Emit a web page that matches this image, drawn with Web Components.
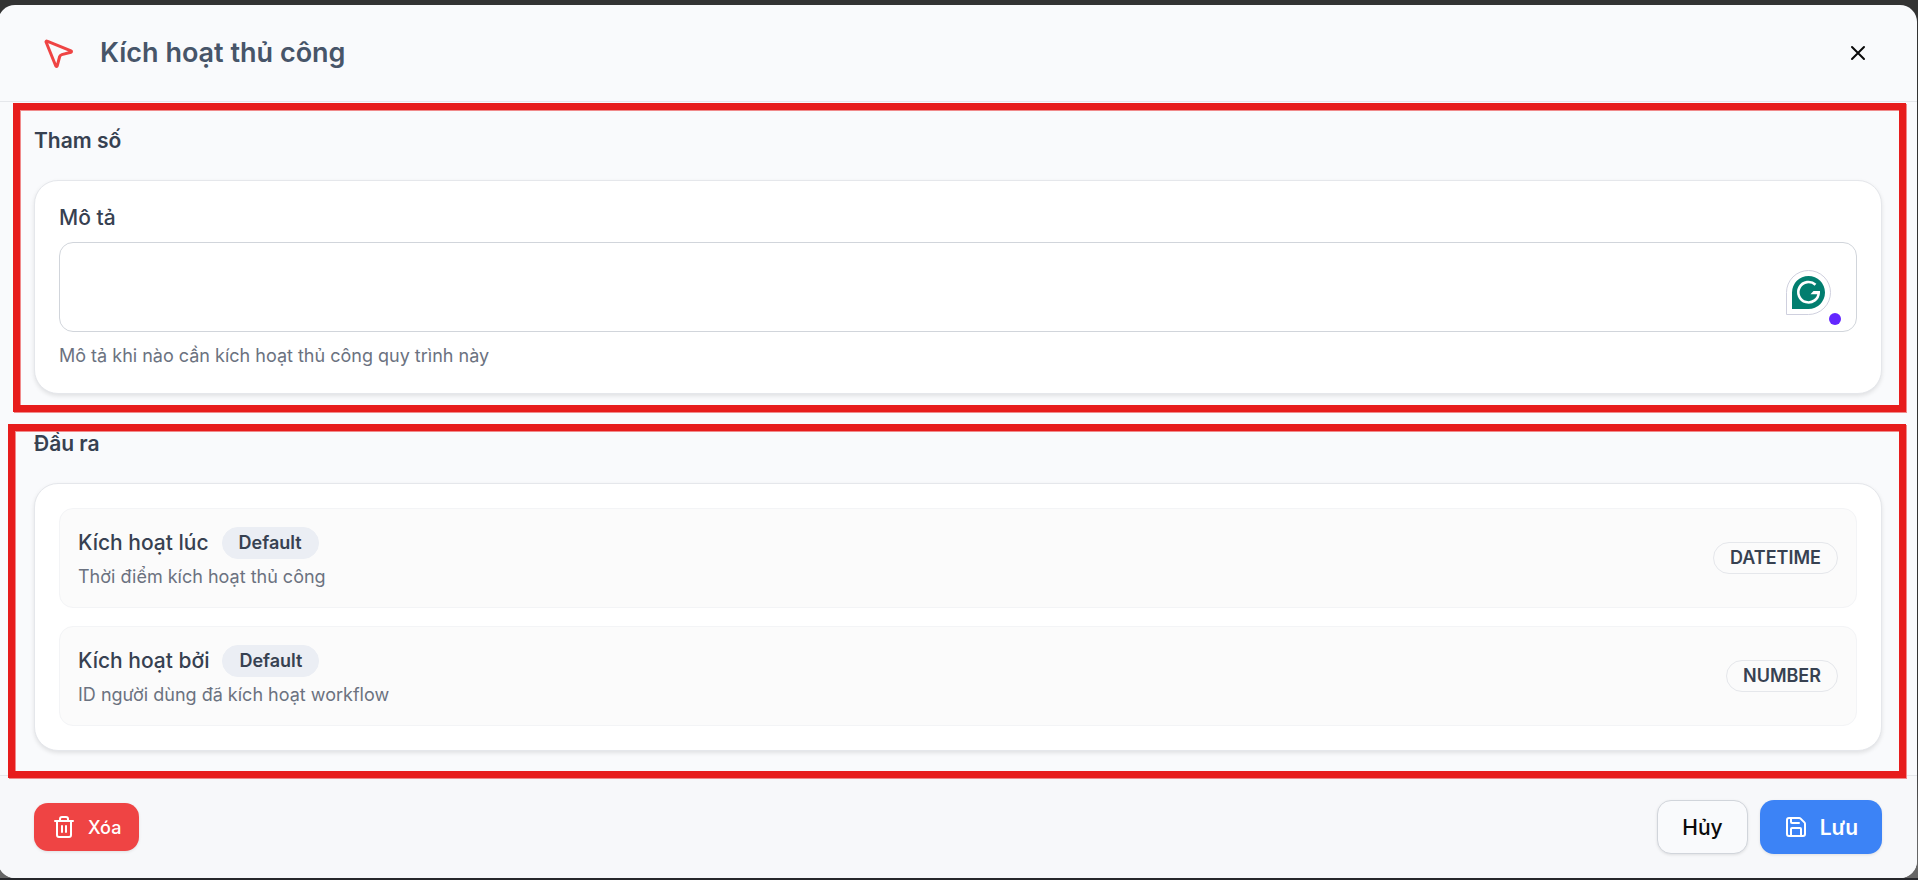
<!DOCTYPE html>
<html lang="vi">
<head>
<meta charset="utf-8">
<meta name="viewport" content="width=device-width, initial-scale=1">
<title>Kích hoạt thủ công</title>
<style>
  body {
    margin: 0;
    min-height: 100vh;
    display: flex;
    box-sizing: border-box;
    padding: 5px 1px 2px 0;
    overflow: hidden;
    background: linear-gradient(#333 0 85%, #666 95% calc(100% - 2px), #26272b calc(100% - 2px));
    font-family: Inter, "Noto Sans", sans-serif;
    color: #374151;
  }
</style>
</head>
<body>

<node-dialog heading="Kích hoạt thủ công">
  <panel-section class="params" heading="Tham số">
    <text-field label="Mô tả" hint="Mô tả khi nào cần kích hoạt thủ công quy trình này"></text-field>
  </panel-section>
  <panel-section class="outputs" heading="Đầu ra">
    <output-item name="Kích hoạt lúc" type="DATETIME">Thời điểm kích hoạt thủ công</output-item>
    <output-item name="Kích hoạt bởi" type="NUMBER">ID người dùng đã kích hoạt workflow</output-item>
  </panel-section>
  <action-button slot="left" variant="danger" icon="trash">Xóa</action-button>
  <action-button slot="right" variant="outline">Hủy</action-button>
  <action-button slot="right" variant="primary" icon="save">Lưu</action-button>
</node-dialog>

<script>
const icons = {
    trash: '<path d="M3 6h18M19 6v14a2 2 0 0 1-2 2H7a2 2 0 0 1-2-2V6M8 6V4a2 2 0 0 1 2-2h4a2 2 0 0 1 2 2v2M10 11v6M14 11v6"/>',
    save: '<path d="M15.2 3a2 2 0 0 1 1.4.6l3.8 3.8a2 2 0 0 1 .6 1.4V19a2 2 0 0 1-2 2H5a2 2 0 0 1-2-2V5a2 2 0 0 1 2-2z"/><path d="M17 21v-7a1 1 0 0 0-1-1H8a1 1 0 0 0-1 1v7M7 3v4a1 1 0 0 0 1 1h7"/>',
    close: '<path d="M18 6 6 18M6 6l12 12"/>',
    pointer: '<path d="M4.037 4.688a.495.495 0 0 1 .651-.651l16 6.5a.5.5 0 0 1-.063.947l-6.124 1.58a2 2 0 0 0-1.438 1.435l-1.579 6.126a.5.5 0 0 1-.947.063z"/>'
};

function icon(name, size) {
    return `<svg width="${size}" height="${size}" viewBox="0 0 24 24" fill="none" stroke="currentColor" stroke-width="2" stroke-linecap="round" stroke-linejoin="round" aria-hidden="true">${icons[name]}</svg>`;
}

class NodeDialog extends HTMLElement {
    constructor() {
        super();
        this.shadowDOM = this.attachShadow({mode: 'open'});
    }

    connectedCallback() {
        this.shadowDOM.innerHTML = `
        <style>
          :host {
            flex: 1;
            display: flex;
            flex-direction: column;
            margin-left: -2px;
            border-radius: 17px;
            background: #f9fafc;
          }

          header {
            display: flex;
            align-items: center;
            gap: 24px;
            height: 96px;
            padding: 0 47px 0 42px;
            border-bottom: 1px solid #e5e7eb;
          }

          header > svg {
            color: #ef4444;
          }

          h1 {
            flex: 1;
            margin: 0;
            font-size: 27px;
            font-weight: 600;
            line-height: 36px;
            color: #475569;
          }

          .close {
            display: flex;
            padding: 0;
            border: none;
            background: none;
            color: #0a0a0a;
            cursor: pointer;
          }

          main {
            display: flex;
            flex-direction: column;
            gap: 36px;
            padding: 25px 35px 24px 36px;
          }

          footer {
            flex: 1;
            display: flex;
            align-items: center;
            justify-content: space-between;
            padding: 0 35px 0 36px;
            border-top: 1px solid #e5e7eb;
            border-radius: 0 0 17px 17px;
            background: #f7f8fa;
          }

          .group {
            display: flex;
            align-items: center;
            gap: 12px;
          }
        </style>

        <header>
          ${icon('pointer', 36)}
          <h1>${this.getAttribute('heading')}</h1>
          <button class="close" type="button" aria-label="Đóng">${icon('close', 24)}</button>
        </header>
        <main><slot></slot></main>
        <footer>
          <div class="group"><slot name="left"></slot></div>
          <div class="group"><slot name="right"></slot></div>
        </footer>`;
    }
}

class PanelSection extends HTMLElement {
    constructor() {
        super();
        this.shadowDOM = this.attachShadow({mode: 'open'});
    }

    connectedCallback() {
        this.shadowDOM.innerHTML = `
        <style>
          :host {
            display: block;
            position: relative;
          }

          h2 {
            margin: 0 0 25px;
            font-size: 21px;
            font-weight: 600;
            line-height: 28px;
          }

          .card {
            display: flex;
            flex-direction: column;
            gap: 18px;
            padding: 24px;
            border: 1px solid #e5e7eb;
            border-radius: 24px;
            background: #fff;
            box-shadow: 0 2px 4px rgba(0, 0, 0, 0.1);
          }

          /* red highlight drawn around the whole section */
          .mark {
            position: absolute;
            inset: -24px -24px -18px -21px;
            border: 7px solid #e71c1c;
            box-shadow: 1px 1px 0 #f08a8b, inset 1px 1px 0 #f08a8b;
            pointer-events: none;
          }

          :host(.outputs) .mark {
            inset: -6px -24px -27px -26px;
          }
        </style>

        <h2>${this.getAttribute('heading')}</h2>
        <div class="card"><slot></slot></div>
        <div class="mark"></div>`;
    }
}

class TextField extends HTMLElement {
    constructor() {
        super();
        this.shadowDOM = this.attachShadow({mode: 'open'});
    }

    connectedCallback() {
        this.shadowDOM.innerHTML = `
        <style>
          :host {
            display: flex;
            flex-direction: column;
            gap: 11px;
          }

          label {
            font-size: 21px;
            font-weight: 500;
            line-height: 26px;
          }

          .box {
            position: relative;
            display: flex;
          }

          textarea {
            flex: 1;
            height: 90px;
            box-sizing: border-box;
            padding: 12px 18px;
            border: 1px solid #d1d5db;
            border-radius: 14px;
            background: #fff;
            font: inherit;
            font-size: 21px;
            color: inherit;
            resize: none;
            outline: none;
          }

          .helper {
            position: absolute;
            top: 28px;
            right: 26px;
          }

          .dot {
            position: absolute;
            right: 16px;
            bottom: 7px;
            width: 12px;
            height: 12px;
            border-radius: 50%;
            background: #6326ff;
          }

          p {
            margin: 0;
            font-size: 18px;
            line-height: 26px;
            color: #6b7280;
          }
        </style>

        <label for="field">${this.getAttribute('label')}</label>
        <div class="box">
          <textarea id="field" aria-describedby="hint"></textarea>
          <svg class="helper" width="45" height="45" viewBox="0 0 45 45" fill="none" aria-hidden="true">
            <path d="M.5 44.5v-22a22 22 0 1 1 22 22z" fill="#fff" stroke="#cfd0de"/>
            <path d="M6 39V22.5a16.5 16.5 0 1 1 16.5 16.5z" fill="#027e6f"/>
            <path d="M29.5 14.8A10.2 10.2 0 1 0 32.7 22.4" stroke="#fff" stroke-width="2.6"/>
            <path d="M24.5 24.2 27.5 21H34V22.5L32.5 24.2z" fill="#fff"/>
          </svg>
          <span class="dot"></span>
        </div>
        <p id="hint">${this.getAttribute('hint')}</p>`;
    }
}

class OutputItem extends HTMLElement {
    constructor() {
        super();
        this.shadowDOM = this.attachShadow({mode: 'open'});
    }

    connectedCallback() {
        this.shadowDOM.innerHTML = `
        <style>
          :host {
            display: flex;
            align-items: center;
            justify-content: space-between;
            padding: 18px;
            border: 1px solid #f3f4f6;
            border-radius: 14px;
            background: #fbfbfb;
          }

          .title {
            display: flex;
            align-items: center;
            gap: 13px;
            margin-bottom: 6px;
            font-size: 21px;
            font-weight: 500;
            line-height: 28px;
          }

          .badge {
            box-sizing: border-box;
            height: 32px;
            padding: 0 16px;
            border: 1px solid #e5e7eb;
            border-radius: 16px;
            font-size: 18px;
            font-weight: 600;
            line-height: 30px;
          }

          .title .badge {
            border-color: #ebeef4;
            background: #ebeef4;
          }

          p {
            margin: 0;
            font-size: 18px;
            line-height: 24px;
            color: #6b7280;
          }
        </style>

        <div>
          <div class="title">${this.getAttribute('name')}<span class="badge">Default</span></div>
          <p><slot></slot></p>
        </div>
        <span class="badge">${this.getAttribute('type')}</span>`;
    }
}

class ActionButton extends HTMLElement {
    constructor() {
        super();
        this.shadowDOM = this.attachShadow({mode: 'open'});
    }

    connectedCallback() {
        const name = this.getAttribute('icon');
        this.shadowDOM.innerHTML = `
        <style>
          :host {
            display: block;
          }

          button {
            display: flex;
            align-items: center;
            gap: 12px;
            height: 54px;
            padding: 0 24px;
            border: none;
            border-radius: 14px;
            font: inherit;
            font-size: 21px;
            font-weight: 500;
            color: #fff;
            box-shadow: 0 1px 3px rgba(0, 0, 0, 0.1);
            cursor: pointer;
          }

          .danger {
            height: 48px;
            padding: 0 18px;
            font-size: 18px;
            background: #ef4444;
          }

          .outline {
            border: 1px solid #d1d5db;
            background: #f9fafc;
            color: #0a0a0a;
          }

          .primary {
            font-weight: 600;
            background: #3c83f6;
          }
        </style>

        <button class="${this.getAttribute('variant')}" type="button">
          ${name ? icon(name, 24) : ''}
          <slot></slot>
        </button>`;
    }
}

customElements.define('node-dialog', NodeDialog);
customElements.define('panel-section', PanelSection);
customElements.define('text-field', TextField);
customElements.define('output-item', OutputItem);
customElements.define('action-button', ActionButton);
</script>
</body>
</html>
